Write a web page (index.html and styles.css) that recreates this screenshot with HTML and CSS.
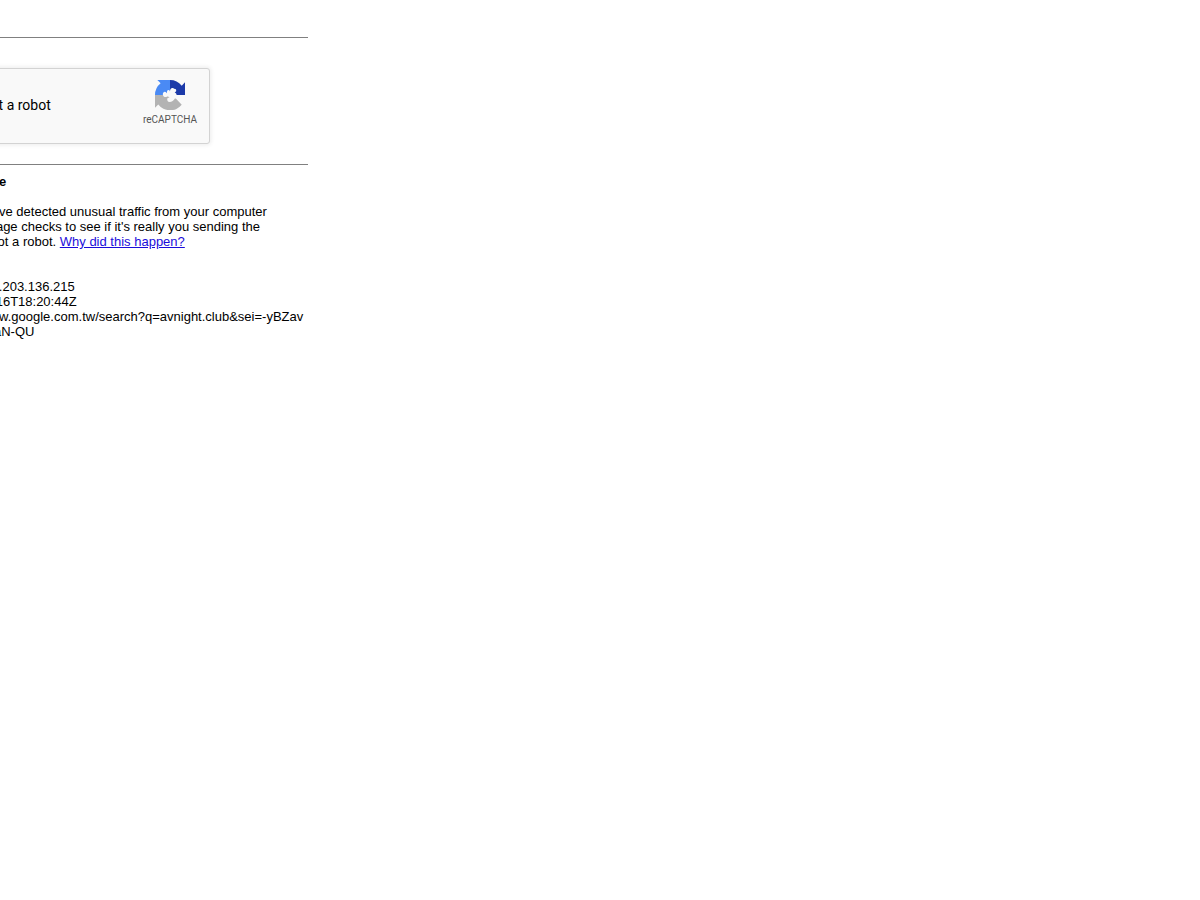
FILE: index.html
```
<!DOCTYPE html>
<html lang="en">
<head>
    <meta charset="UTF-8">
    <meta name="viewport" content="width=device-width, initial-scale=1.0">
    <title>Unusual traffic</title>
    <link rel="stylesheet" href="styles.css">
</head>
<body>
    <main class="content">
        <hr>
        <form class="captcha-form">
            <div class="captcha">
                <input type="checkbox" id="robot-check">
                <label for="robot-check">I'm not a robot</label>
                <div class="brand">
                    <svg class="logo" viewBox="0 0 64 64" aria-hidden="true">
                        <path fill="#1c3aa9" d="M64 32V5l-7 7A32 32 0 0 0 32 0v24c0-4 2-7 5-7 2 0 3 1 4 2 3-1 5 2 4 5l-3 3c3 0 4 2 4 5z"/>
                        <path fill="#4a8af4" d="M32 0H5l7 7A32 32 0 0 0 0 32h17c-1-4 1-7 4-7 3 0 3 3 4 3 1-2 0-4 2-6 2-2 5 0 5 3z"/>
                        <path fill="#b3b3b3" d="M0 32v27l7-7A32 32 0 0 0 57 53L46 41c-1-2-3-2-4-1-2 4-6 7-11 7-4 0-5-3-5-7 1-2 3-2 5-2-1-2-3-3-5-3-3 2-8 2-9-3z"/>
                    </svg>
                    <span>reCAPTCHA</span>
                </div>
            </div>
        </form>
        <hr>
        <div class="about">
            <b>About this page</b>
            <p>Our systems have detected unusual traffic from your computer network. This page checks to see if it's really you sending the requests, and not a robot. <a href="#">Why did this happen?</a></p>
            <p class="details">IP address: 124.203.136.215<br>Time: 2024-06-16T18:20:44Z<br>URL: https://www.google.com.tw/search?q=avnight.club&amp;sei=-yBZavDmKcLh2rwPkaN-QU</p>
        </div>
    </main>
</body>
</html>
```
FILE: styles.css
```
body{
    margin: 0;
    background-color: #fff;
    color: #000;
    font-family: "Liberation Sans", Arial, sans-serif;
    overflow-x: hidden;
}
.content{
    max-width: 400px;
    margin: 37px 0 0 -92px;
}
hr{
    height: 1px;
    margin: 0;
    border: none;
    background-color: #808080;
}
.captcha-form{
    padding: 30px 0 20px;
}
.captcha{
    display: flex;
    align-items: center;
    box-sizing: border-box;
    width: 302px;
    height: 76px;
    padding: 0 12px 2px;
    background-color: #f9f9f9;
    border: 1px solid #d3d3d3;
    border-radius: 3px;
    box-shadow: 0 0 4px 1px rgba(0, 0, 0, 0.08);
    font-family: Roboto, sans-serif;
    font-size: 14px;
}
.captcha input{
    width: 28px;
    height: 28px;
    margin: 0 12px 0 0;
}
.brand{
    display: flex;
    flex-direction: column;
    align-items: center;
    margin: 0 0 2px auto;
    color: #555;
    font-size: 10px;
    line-height: 16px;
}
.logo{
    width: 30px;
    height: 30px;
    margin-bottom: 2px;
}
.about{
    padding-top: 9px;
    font-size: 13px;
    line-height: 15px;
}
.about p{
    margin: 15px 0 0;
    overflow-wrap: break-word;
}
.about .details{
    margin-top: 30px;
    word-break: break-all;
}
.about a{
    color: #1a0dda;
}
```
